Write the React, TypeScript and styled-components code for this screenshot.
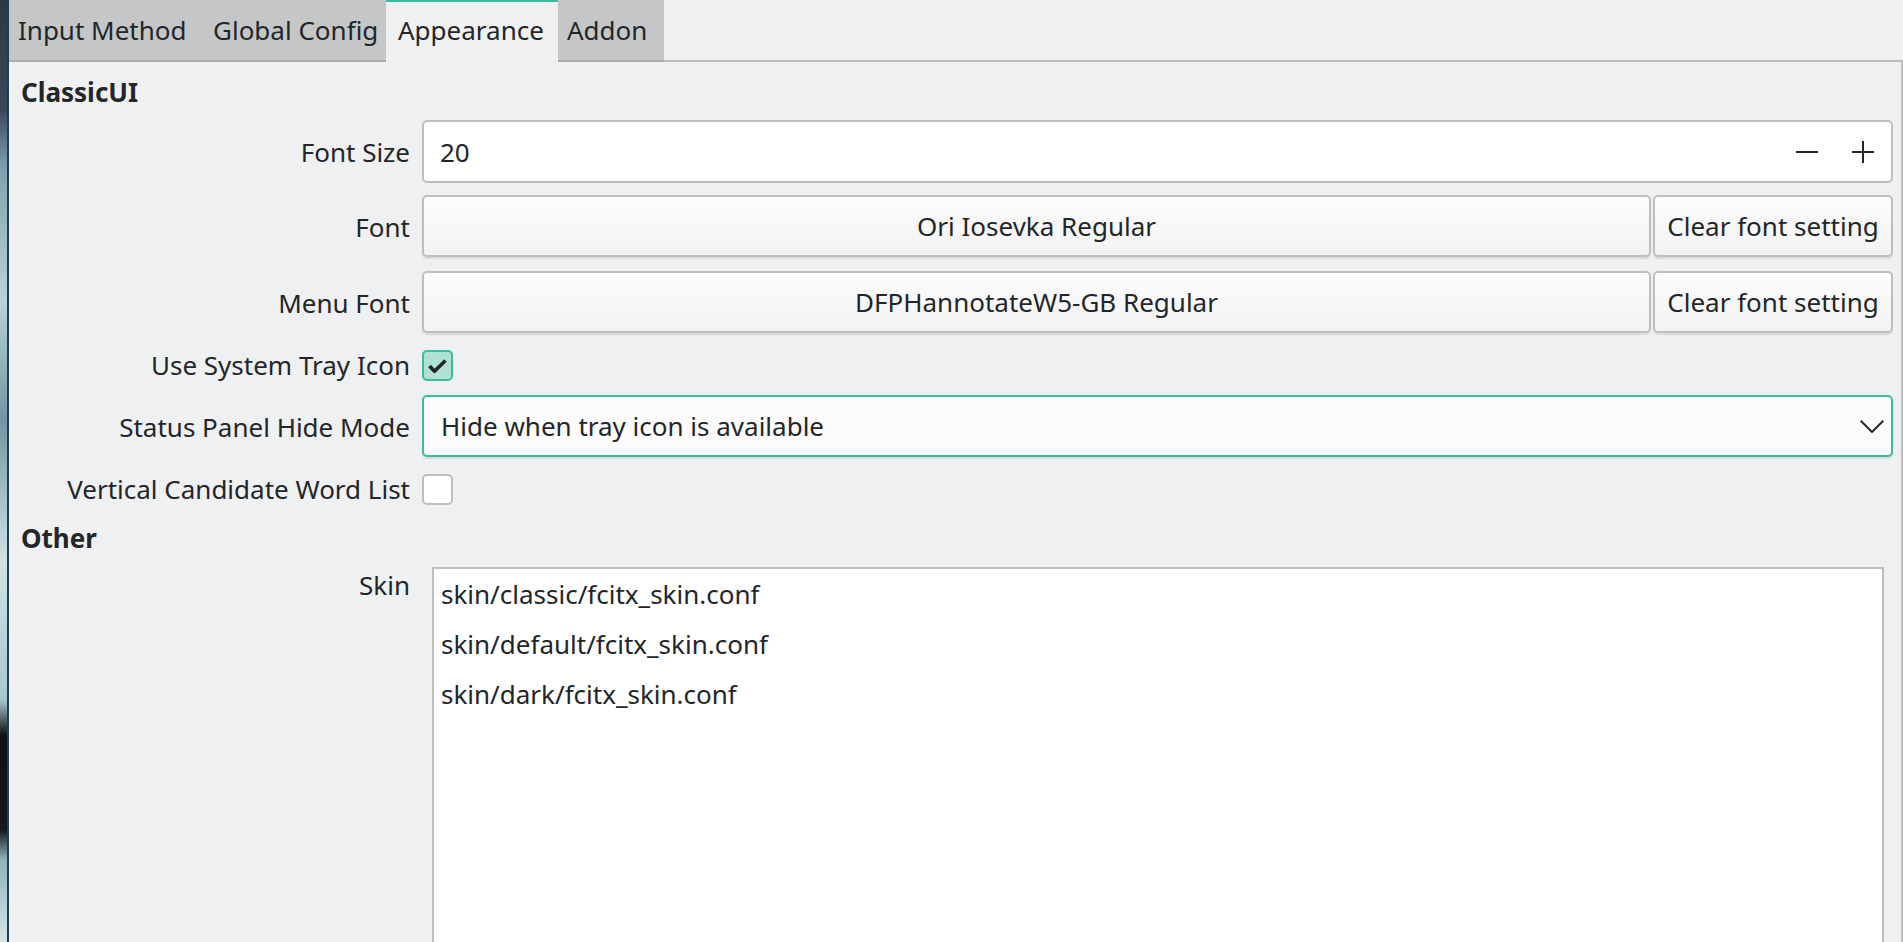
import styled, { createGlobalStyle } from "styled-components";

const GlobalStyle = createGlobalStyle`
    html, body {
        margin: 0;
        padding: 0;
        height: 100%;
        overflow: hidden;
    }

    body {
        font-family: "Noto Sans", "DejaVu Sans", sans-serif;
        font-size: 26px;
        color: #232629;
        background: #eff0f1;
    }

    #root {
        height: 100%;
    }
`;

const TABS = [
    { name: "Input Method", width: 195 },
    { name: "Global Config", width: 182 },
    { name: "Appearance", width: 172 },
    { name: "Addon", width: 106 },
];
const SKINS = [
    "skin/classic/fcitx_skin.conf",
    "skin/default/fcitx_skin.conf",
    "skin/dark/fcitx_skin.conf",
];

function App() {
    return (
        <>
            <GlobalStyle />
            <Screen>
                <Wallpaper />
                <Window>
                    <TabBar>
                        {TABS.map(tab => (
                            <Tab key={tab.name} $width={tab.width} $active={tab.name === "Appearance"}>
                                {tab.name}
                            </Tab>
                        ))}
                        <TabFiller />
                    </TabBar>
                    <Panel>
                        <SectionTitle>ClassicUI</SectionTitle>
                        <Form>
                            <Label>Font Size</Label>
                            <SpinBox>
                                <SpinValue>20</SpinValue>
                                <SpinButtons>
                                    <svg width="22" height="22" viewBox="0 0 22 22">
                                        <path d="M0 11h22" stroke="#232629" strokeWidth="2" />
                                    </svg>
                                    <svg width="22" height="22" viewBox="0 0 22 22">
                                        <path d="M0 11h22M11 0v22" stroke="#232629" strokeWidth="2" />
                                    </svg>
                                </SpinButtons>
                            </SpinBox>

                            <Label>Font</Label>
                            <FontPicker>
                                <PushButton $grow>Ori Iosevka Regular</PushButton>
                                <PushButton>Clear font setting</PushButton>
                            </FontPicker>

                            <Label>Menu Font</Label>
                            <FontPicker>
                                <PushButton $grow>DFPHannotateW5-GB Regular</PushButton>
                                <PushButton>Clear font setting</PushButton>
                            </FontPicker>

                            <Label>Use System Tray Icon</Label>
                            <CheckBox $checked>
                                <svg width="27" height="27" viewBox="0 0 27 27">
                                    <polyline points="5.5,14 10.5,19.3 21.5,8.5" fill="none"
                                        stroke="#232629" strokeWidth="3.6" strokeLinejoin="round" />
                                </svg>
                            </CheckBox>

                            <Label>Status Panel Hide Mode</Label>
                            <ComboBox>
                                <span>Hide when tray icon is available</span>
                                <svg width="24" height="13" viewBox="0 0 24 13">
                                    <polyline points="0.7,0.7 12,12 23.3,0.7" fill="none"
                                        stroke="#232629" strokeWidth="2" />
                                </svg>
                            </ComboBox>

                            <Label>Vertical Candidate Word List</Label>
                            <CheckBox />
                        </Form>

                        <SectionTitle $spaced>Other</SectionTitle>
                        <SkinRow>
                            <Label $top>Skin</Label>
                            <SkinList>
                                {SKINS.map(skin => <SkinItem key={skin}>{skin}</SkinItem>)}
                            </SkinList>
                        </SkinRow>
                    </Panel>
                </Window>
            </Screen>
        </>
    );
}

const Screen = styled.div`
    display: flex;
    height: 100%;
`;

const Wallpaper = styled.div`
    width: 7px;
    flex-shrink: 0;
    background: linear-gradient(180deg,
        #2c3944 0, #39495a 110px, #7fa3ae 170px, #b9d3d8 300px, #6f98a2 420px,
        #cfe2e4 560px, #a6c8cd 700px, #0e1216 735px, #15191d 830px,
        #8db5bb 860px, #d5e6e8 942px);
`;

const Window = styled.div`
    flex: 1;
    display: flex;
    flex-direction: column;
    border-left: 2px solid #1e3b57;
    min-width: 0;
`;

const TabBar = styled.div`
    display: flex;
    height: 62px;
    flex-shrink: 0;
`;

const Tab = styled.div<{ $active?: boolean; $width: number }>`
    box-sizing: border-box;
    width: ${props => props.$width}px;
    height: 62px;
    padding: 0 0 2px ${props => props.$active ? "12px" : "9px"};
    display: flex;
    align-items: center;
    white-space: nowrap;
    background: ${props => props.$active ? "#eff0f1" : "#c5c6c8"};
    border-top: 2px solid ${props => props.$active ? "#3bbb9f" : "#c5c6c8"};
    border-bottom: 2px solid ${props => props.$active ? "#eff0f1" : "#a9aaac"};
`;

const TabFiller = styled.div`
    flex: 1;
    border-bottom: 2px solid #bcbdbf;
`;

const Panel = styled.div`
    flex: 1;
    display: flex;
    flex-direction: column;
    padding: 12px 8px 0 12px;
    border-right: 2px solid #bcbdbf;
    background: #eff0f1;
    overflow: hidden;
`;

const SectionTitle = styled.div<{ $spaced?: boolean }>`
    font-weight: 700;
    height: 36px;
    line-height: 36px;
    margin: ${props => props.$spaced ? "13px 0 11px" : "0 0 10px"};
`;

const Form = styled.div`
    display: grid;
    grid-template-columns: 389px 1fr;
    column-gap: 12px;
    row-gap: 12px;
`;

const Label = styled.div<{ $top?: boolean }>`
    text-align: right;
    white-space: nowrap;
    line-height: 36px;
    align-self: ${props => props.$top ? "start" : "center"};
`;

const SpinBox = styled.div`
    box-sizing: border-box;
    height: 63px;
    display: flex;
    align-items: center;
    background: #ffffff;
    border: 2px solid #bdbebf;
    border-radius: 5px;
    padding: 0 17px 0 16px;
`;

const SpinValue = styled.span`
    flex: 1;
`;

const SpinButtons = styled.div`
    display: flex;
    gap: 34px;
`;

const FontPicker = styled.div`
    display: flex;
    gap: 2px;
    height: 64px;
    align-items: flex-start;
`;

const PushButton = styled.div<{ $grow?: boolean }>`
    box-sizing: border-box;
    height: 62px;
    display: flex;
    align-items: center;
    justify-content: center;
    white-space: nowrap;
    flex: ${props => props.$grow ? "1" : "0 0 240px"};
    background: linear-gradient(180deg, #fcfcfc, #f3f3f4);
    border: 2px solid #bdbebf;
    border-radius: 5px;
    box-shadow: 0 2px 1px rgba(0, 0, 0, 0.09);
`;

const CheckBox = styled.div<{ $checked?: boolean }>`
    box-sizing: border-box;
    width: 31px;
    height: 31px;
    align-self: center;
    display: flex;
    align-items: center;
    justify-content: center;
    border-radius: 5px;
    border: 2px solid ${props => props.$checked ? "#3bbb9f" : "#bdbebf"};
    background: ${props => props.$checked ? "#b1e1d5" : "#ffffff"};
`;

const ComboBox = styled.div`
    box-sizing: border-box;
    height: 62px;
    margin-bottom: 2px;
    display: flex;
    align-items: center;
    justify-content: space-between;
    padding: 0 7px 0 17px;
    background: #fcfcfc;
    border: 2px solid #3bbb9f;
    border-radius: 5px;
    box-shadow: 0 2px 1px rgba(0, 0, 0, 0.09);
`;

const SkinRow = styled.div`
    flex: 1;
    display: grid;
    grid-template-columns: 389px 1fr;
    column-gap: 12px;
    min-height: 0;
`;

const SkinList = styled.div`
    margin: 0 9px 0 10px;
    min-height: 420px;
    background: #ffffff;
    border: 2px solid #bdbebf;
    border-bottom: none;
`;

const SkinItem = styled.div`
    height: 50px;
    line-height: 50px;
    padding: 0 7px;
    white-space: nowrap;
`;

export default App;
